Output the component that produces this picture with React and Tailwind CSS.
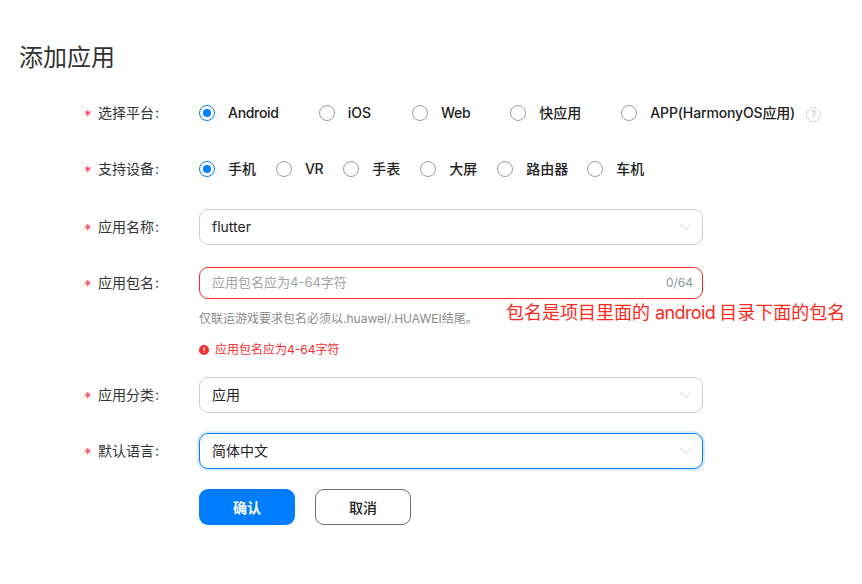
import { ChevronDown } from 'lucide-react';

const font = { fontFamily: 'Inter, "Noto Sans CJK SC", sans-serif' };

function Radio({ label, checked, className = '', textClass = '' }) {
  return (
    <label className={`flex items-center ${className}`}>
      {checked ? (
        <span className="w-4 h-4 rounded-full border border-[#007dff] flex items-center justify-center">
          <span className="w-2 h-2 rounded-full bg-[#007dff]" />
        </span>
      ) : (
        <span className="w-4 h-4 rounded-full border border-[#9a9ea5]" />
      )}
      <span className={`ml-[13px] -translate-y-px text-[14px] font-medium text-[#222] whitespace-nowrap ${textClass}`}>{label}</span>
    </label>
  );
}

function Label({ text }) {
  return (
    <div className="w-[199px] shrink-0 flex items-center pl-[84px] text-[14px] text-[#333]">
      <span className="w-[14px] text-[15px] leading-none text-[#f5414f] translate-y-[2px]">*</span>
      <span className="-translate-y-px whitespace-nowrap">{text}</span>
      <span className="ml-px -translate-y-px">:</span>
    </div>
  );
}

function Select({ value, focused }) {
  return (
    <div
      className={`w-[504px] h-9 pl-3 flex items-center justify-between rounded-[9px] border text-[14px] text-[#222] ${
        focused ? 'border-[#007dff] shadow-[0_0_0_2px_#d9ecff]' : 'border-[#cfcfcf]'
      }`}
    >
      <span className="-translate-y-px">{value}</span>
      <ChevronDown size={20} strokeWidth={1} className="text-[#c4c4c4] mr-[6px]" />
    </div>
  );
}

export default function App() {
  return (
    <div className="relative w-[862px] h-[584px] bg-white overflow-hidden" style={font}>
      <h1 className="pl-[19px] pt-[42px] text-[24px] leading-8 font-normal text-[#333]">添加应用</h1>

      <div className="mt-[23px] flex flex-col">
        <div className="flex h-8 items-center">
          <Label text="选择平台" />
          <div className="flex items-center">
            <Radio label="Android" checked textClass="tracking-[-0.3px]" />
            <Radio label="iOS" className="ml-10" />
            <Radio label="Web" className="ml-[41px]" textClass="tracking-[-0.3px]" />
            <Radio label="快应用" className="ml-10" />
            <Radio label="APP(HarmonyOS应用)" className="ml-10" textClass="tracking-[-0.15px]" />
            <span className="ml-[11px] mt-[2px] w-[15px] h-[15px] rounded-full border border-[#d5d5d5] text-[#c4c4c4] text-[10px] leading-none flex items-center justify-center">?</span>
          </div>
        </div>

        <div className="flex h-8 mt-6 items-center">
          <Label text="支持设备" />
          <div className="flex items-center">
            <Radio label="手机" checked />
            <Radio label="VR" className="ml-5" textClass="tracking-[-0.4px]" />
            <Radio label="手表" className="ml-5" />
            <Radio label="大屏" className="ml-5" />
            <Radio label="路由器" className="ml-5" />
            <Radio label="车机" className="ml-[19px]" />
          </div>
        </div>

        <div className="flex mt-6 items-center">
          <Label text="应用名称" />
          <Select value="flutter" />
        </div>

        <div className="flex mt-[22px] h-8 items-center">
          <Label text="应用包名" />
          <div className="w-[504px] h-8 pl-3 pr-[9px] flex items-center justify-between rounded-[9px] border border-[#fa2a2d] text-[13px]">
            <span className="text-[#a3a3a3]">应用包名应为4-64字符</span>
            <span className="text-[12px] text-[#8f9299]">0/64</span>
          </div>
        </div>

        <p className="ml-[199px] mt-[11px] h-[18px] text-[12px] leading-[18px] text-[#8a8a8a]">
          仅联运游戏要求包名必须以.huawei/.HUAWEI结尾。
        </p>

        <div className="ml-[199px] mt-[13px] h-[18px] flex items-center text-[12px] text-[#fa2a2d]">
          <span className="w-[10px] h-[10px] rounded-full bg-[#fa2a2d] text-white text-[8px] font-bold leading-none flex items-center justify-center">!</span>
          <span className="ml-[6px]">应用包名应为4-64字符</span>
        </div>

        <div className="flex mt-[18px] items-center">
          <Label text="应用分类" />
          <Select value="应用" />
        </div>

        <div className="flex mt-5 items-center">
          <Label text="默认语言" />
          <Select value="简体中文" focused />
        </div>

        <div className="flex ml-[199px] mt-5 gap-5">
          <button className="w-24 h-9 rounded-[9px] bg-[#007dff] text-white text-[14px] font-bold">确认</button>
          <button className="w-24 h-9 rounded-[9px] border border-[#6e6e6e] text-[#222] text-[14px] font-medium">取消</button>
        </div>
      </div>

      {/* annotation drawn on top of the screenshot */}
      <span className="absolute left-[506px] top-[301px] text-[18px] leading-6 text-[#fa2a1e] whitespace-nowrap">
        包名是项目里面的<span className="ml-[5px] mr-[4px] tracking-[-0.6px]">android</span>目录下面的包名
      </span>
    </div>
  );
}
